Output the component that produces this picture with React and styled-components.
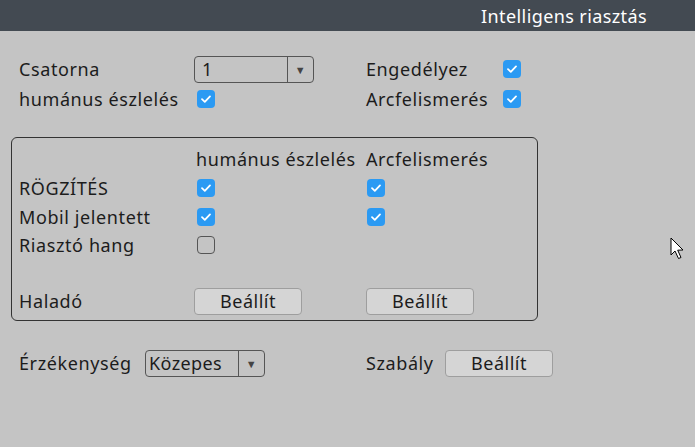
import React from "react";
import styled, { createGlobalStyle } from "styled-components";

const GlobalStyle = createGlobalStyle`
  html, body {
    margin: 0;
    padding: 0;
    background: #c4c4c4;
  }
  body {
    font-family: "Noto Sans", "Open Sans", sans-serif;
    color: #1c1c1c;
  }
`;

const Page = styled.div`
  position: relative;
  width: 695px;
  height: 447px;
  background: #c4c4c4;
  overflow: hidden;
`;

const Header = styled.div`
  height: 31px;
  background: #434a52;
  display: flex;
  align-items: center;
  justify-content: flex-end;
  padding-right: 48px;
  color: #ffffff;
  font-size: 18px;
  letter-spacing: 0.4px;
`;

const Content = styled.div`
  padding: 24px 0 0 19px;
`;

const Row = styled.div`
  display: flex;
  align-items: center;
  height: ${(p) => p.$h || 30}px;
`;

const Cell = styled.div`
  width: ${(p) => p.$w}px;
  flex: none;
  display: flex;
  align-items: center;
  font-size: 18px;
  letter-spacing: 0.6px;
  white-space: nowrap;
`;

const Check = styled.span`
  width: 18px;
  height: 18px;
  border-radius: 4px;
  box-sizing: border-box;
  display: inline-flex;
  align-items: center;
  justify-content: center;
  margin-left: ${(p) => p.$ml ?? 1}px;
  background: ${(p) => (p.$on ? "#2b9af3" : "transparent")};
  border: ${(p) => (p.$on ? "none" : "1px solid #555")};
`;

const SelectBox = styled.div`
  width: ${(p) => p.$w}px;
  height: 27px;
  box-sizing: border-box;
  border: 1px solid #555;
  border-radius: 4px;
  display: flex;
  align-items: stretch;
  font-size: 18px;
  letter-spacing: 0.4px;
`;

const SelectValue = styled.div`
  flex: 1;
  display: flex;
  align-items: center;
  padding-left: ${(p) => p.$pl || 7}px;
`;

const SelectArrow = styled.div`
  width: 25px;
  border-left: 1px solid #555;
  display: flex;
  align-items: center;
  justify-content: center;
  color: #444;
  font-size: 11px;
`;

const Group = styled.div`
  margin: 22px 0 0 -8px;
  width: 527px;
  height: 184px;
  box-sizing: border-box;
  border: 1px solid #333;
  border-radius: 6px;
  padding: 7px 0 0 7px;
  display: flex;
  flex-direction: column;
`;

const Spacer = styled.div`
  height: ${(p) => p.$h}px;
`;

const Button = styled.button`
  width: ${(p) => p.$w || 108}px;
  height: 27px;
  box-sizing: border-box;
  border: 1px solid #9e9e9e;
  border-radius: 4px;
  background: #d5d5d5;
  font-family: "Noto Sans", "Open Sans", sans-serif;
  font-size: 18px;
  letter-spacing: 0.5px;
  color: #1c1c1c;
  padding: 0;
`;

const Bottom = styled.div`
  margin-top: 28px;
`;

const Cursor = styled.svg`
  position: absolute;
  left: 670px;
  top: 237px;
`;

const Tick = () => (
  <svg width="12" height="10" viewBox="0 0 12 10">
    <path d="M2 5.2 L4.8 7.8 L10 2.4" fill="none" stroke="#fff" strokeWidth="1.8" strokeLinecap="round" strokeLinejoin="round" />
  </svg>
);

const Box = ({ on, ml }) => <Check $on={on} $ml={ml}>{on && <Tick />}</Check>;

const Select = ({ w, value, pl }) => (
  <SelectBox $w={w}>
    <SelectValue $pl={pl}>{value}</SelectValue>
    <SelectArrow>▼</SelectArrow>
  </SelectBox>
);

export default function App() {
  return (
    <Page>
      <GlobalStyle />
      <Header>Intelligens riasztás</Header>
      <Content>
        <Row $h={28}>
          <Cell $w={175}>Csatorna</Cell>
          <Cell $w={172}>
            <Select w={120} value="1" />
          </Cell>
          <Cell $w={137}>Engedélyez</Cell>
          <Cell $w={40}>
            <Box on ml={0} />
          </Cell>
        </Row>
        <Row $h={32}>
          <Cell $w={178}>humánus észlelés</Cell>
          <Cell $w={169}>
            <Box on ml={0} />
          </Cell>
          <Cell $w={137}>Arcfelismerés</Cell>
          <Cell $w={40}>
            <Box on ml={0} />
          </Cell>
        </Row>

        <Group>
          <Row $h={28}>
            <Cell $w={177}></Cell>
            <Cell $w={170}>humánus észlelés</Cell>
            <Cell $w={150}>Arcfelismerés</Cell>
          </Row>
          <Row $h={30}>
            <Cell $w={177}>RÖGZÍTÉS</Cell>
            <Cell $w={170}>
              <Box on />
            </Cell>
            <Cell $w={150}>
              <Box on />
            </Cell>
          </Row>
          <Row $h={28}>
            <Cell $w={177}>Mobil jelentett</Cell>
            <Cell $w={170}>
              <Box on />
            </Cell>
            <Cell $w={150}>
              <Box on />
            </Cell>
          </Row>
          <Row $h={28}>
            <Cell $w={177}>Riasztó hang</Cell>
            <Cell $w={170}>
              <Box />
            </Cell>
          </Row>
          <Spacer $h={28} />
          <Row $h={28}>
            <Cell $w={175}>Haladó</Cell>
            <Cell $w={172}>
              <Button>Beállít</Button>
            </Cell>
            <Cell $w={150}>
              <Button>Beállít</Button>
            </Cell>
          </Row>
        </Group>

        <Bottom>
          <Row $h={28}>
            <Cell $w={126}>Érzékenység</Cell>
            <Cell $w={221}>
              <Select w={120} value="Közepes" pl={3} />
            </Cell>
            <Cell $w={79}>Szabály</Cell>
            <Cell $w={120}>
              <Button>Beállít</Button>
            </Cell>
          </Row>
        </Bottom>
      </Content>
      <Cursor width="16" height="26" viewBox="0 0 16 26">
        <path d="M1 1 L1 18 L5 14 L8.5 21.5 L11 20.5 L7.7 13.2 L13 13 Z" fill="#fff" stroke="#000" strokeWidth="1" strokeLinejoin="round" />
      </Cursor>
    </Page>
  );
}
